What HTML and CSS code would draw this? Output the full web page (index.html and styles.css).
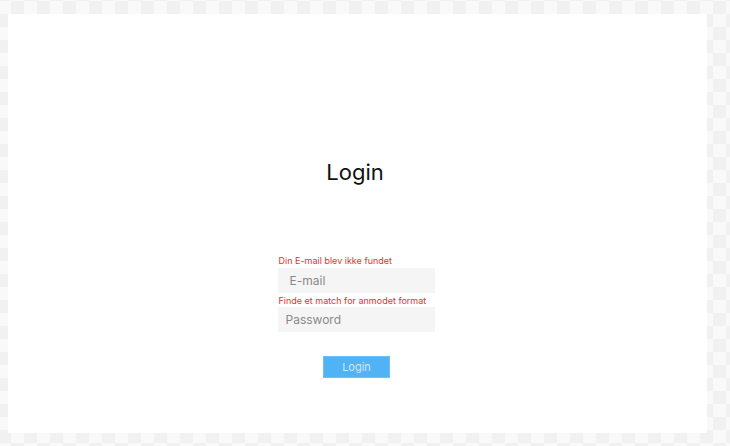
FILE: index.html
```html
<!DOCTYPE html>
<html lang="da">
<head>
<meta charset="utf-8">
<title>Login</title>
<link rel="stylesheet" href="styles.css">
</head>
<body>
<main class="card">
  <h1 class="title">Login</h1>
  <form class="form">
    <div class="error error-first">Din E-mail blev ikke fundet</div>
    <input class="field field-email" type="email" placeholder="E-mail">
    <div class="error">Finde et match for anmodet format</div>
    <input class="field field-password" type="password" placeholder="Password">
    <button class="btn" type="button">Login</button>
  </form>
</main>
</body>
</html>
```
FILE: styles.css
```css
html, body {
  margin: 0;
  padding: 0;
}
body {
  width: 730px;
  height: 446px;
  overflow: hidden;
  font-family: Inter, "Noto Sans", sans-serif;
  background-color: #f9f9f9;
  background-image: conic-gradient(#f1f1f1 0 25%, #f9f9f9 0 50%, #f1f1f1 0 75%, #f9f9f9 0);
  background-size: 26px 26px;
  background-position: -2px 1px;
  padding-top: 14px;
  box-sizing: border-box;
}
.card {
  margin-left: 8px;
  width: 699px;
  height: 419px;
  background: #ffffff;
  display: flex;
  flex-direction: column;
  align-items: center;
  padding-top: 144px;
  box-sizing: border-box;
}
.title {
  margin: 0 5px 0 0;
  font-size: 22px;
  line-height: 28px;
  font-weight: 400;
  color: #111;
}
.form {
  margin-top: 69px;
  width: 157px;
  display: flex;
  flex-direction: column;
  margin-left: -3px;
}
.error {
  font-size: 9px;
  line-height: 11px;
  color: #e8312f;
  margin-left: 1px;
  white-space: nowrap;
}
.error-first {
  margin-bottom: 1px;
}
.field {
  height: 25px;
  width: 157px;
  box-sizing: border-box;
  border: none;
  outline: none;
  background: #f5f5f5;
  font-family: Inter, "Noto Sans", sans-serif;
  font-size: 12px;
  color: #333;
  margin: 1px 0 2px;
}
.field::placeholder {
  color: #8a8a8a;
}
.field-email {
  padding-left: 12px;
}
.field-password {
  padding-left: 8px;
}
.btn {
  align-self: center;
  margin-top: 22px;
  width: 67px;
  height: 22px;
  background: #4fb3f6;
  border: 1px solid #6cc0f8;
  color: #cfe8fc;
  font-family: Inter, "Noto Sans", sans-serif;
  font-size: 11px;
  padding: 0;
  margin-left: 1px;
}
```
